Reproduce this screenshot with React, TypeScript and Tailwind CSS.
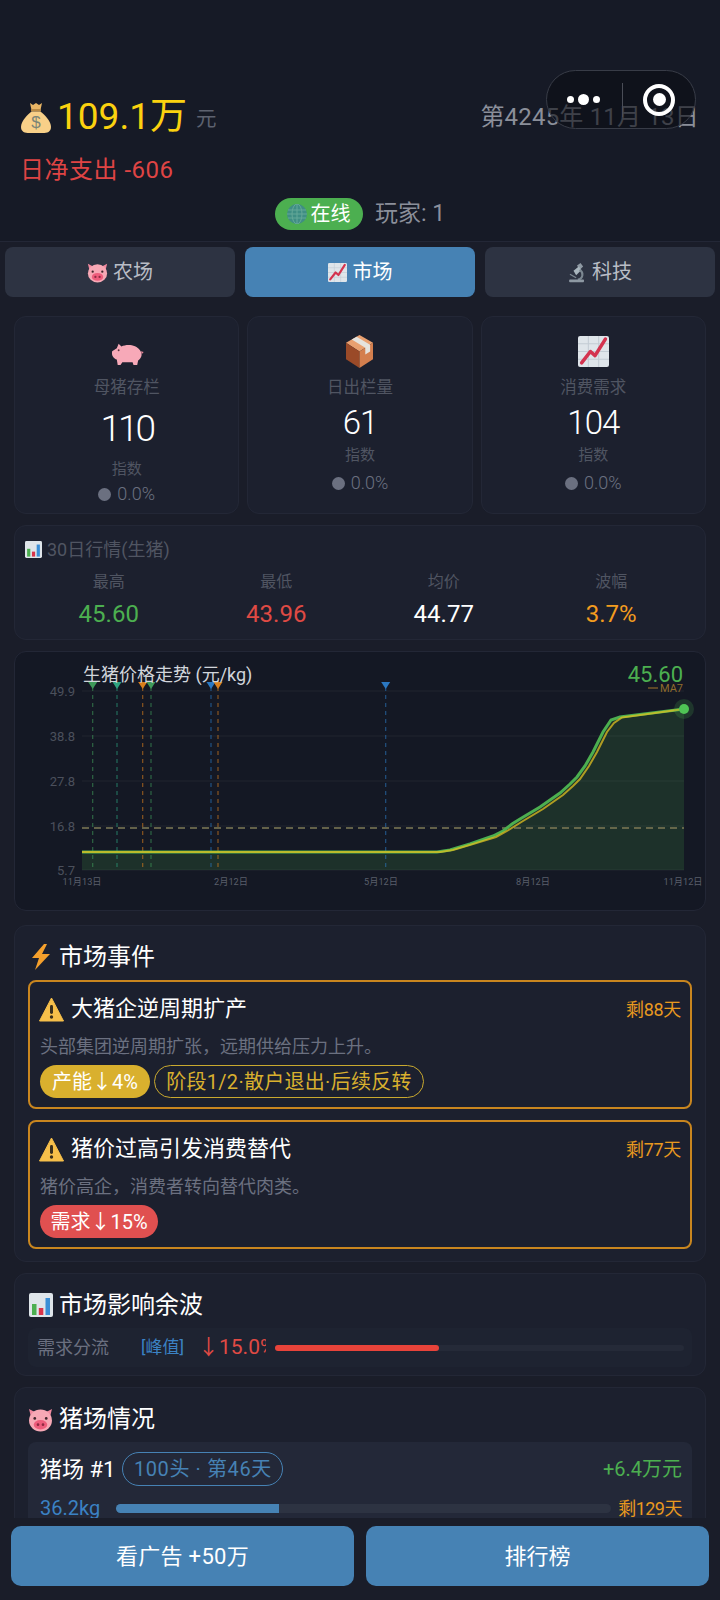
import React from 'react'

const MoneyBag = () => (
  <svg width="32" height="34" viewBox="0 0 32 34">
    <path d="M10 3 L13 5 L16 3 L19 5 L22 3 L20.5 10 H11.5 Z" fill="#e9b565" />
    <rect x="11" y="9" width="10" height="2.5" rx="1" fill="#b98a45" />
    <path d="M11.5 11.5 C6 16 1 22 1 27 C1 32 5 33 9 33 H23 C27 33 31 32 31 27 C31 22 26 16 20.5 11.5 Z" fill="#f8d088" />
    <text x="16" y="28" textAnchor="middle" fontSize="17" fontFamily="Liberation Sans, sans-serif" fill="#7c8577">$</text>
  </svg>
)

const PigFace = ({ size = 24 }: { size?: number }) => (
  <svg width={size} height={size} viewBox="0 0 24 24">
    <path d="M1 2 L7 5 L3 10 Z M23 2 L17 5 L21 10 Z" fill="#f28aa0" />
    <ellipse cx="12" cy="13" rx="11" ry="10.5" fill="#f7a8b5" />
    <circle cx="6.5" cy="11" r="1.3" fill="#40262c" />
    <circle cx="17.5" cy="11" r="1.3" fill="#40262c" />
    <ellipse cx="12" cy="17" rx="6.5" ry="4.5" fill="#ee5d7c" />
    <circle cx="9.6" cy="17" r="1.3" fill="#8f2a42" />
    <circle cx="14.4" cy="17" r="1.3" fill="#8f2a42" />
  </svg>
)

const ChartUp = ({ size = 22 }: { size?: number }) => (
  <svg width={size} height={size} viewBox="0 0 30 30">
    <rect x="0" y="0" width="30" height="30" rx="2" fill="#dfe5ea" />
    <path d="M0 7.5 H30 M0 15 H30 M0 22.5 H30 M10 0 V30 M20 0 V30" stroke="#c3ccd4" strokeWidth="1" />
    <path d="M3.5 26 L12 15 L16.5 19 L26.5 3" fill="none" stroke="#d4334f" strokeWidth="3.4" strokeLinejoin="round" strokeLinecap="round" />
  </svg>
)

const BarChart = ({ size = 24 }: { size?: number }) => (
  <svg width={size} height={size} viewBox="0 0 24 24">
    <rect x="0" y="0" width="24" height="24" rx="2" fill="#dfe5ea" />
    <rect x="3" y="11" width="4.5" height="11" fill="#4caf50" />
    <rect x="9.8" y="15" width="4.5" height="7" fill="#d9344a" />
    <rect x="16.5" y="5" width="4.5" height="17" fill="#3b8ed6" />
  </svg>
)

const Microscope = () => (
  <svg width="18" height="21" viewBox="0 0 20 24">
    <path d="M10 4 L14 1 L17 5 L13 9 Z" fill="#8e99a3" />
    <path d="M6 10 L12 5 L15 9 L9 15 Z" fill="#a9b6be" />
    <path d="M13 9 C18 12 17 19 11 20" fill="none" stroke="#7b8791" strokeWidth="2.4" />
    <rect x="1" y="20" width="17" height="3" rx="1" fill="#8e99a3" />
    <path d="M2 14 L9 18" stroke="#7b8791" strokeWidth="1.6" />
  </svg>
)

const Globe = () => (
  <svg width="20" height="20" viewBox="0 0 20 20">
    <circle cx="10" cy="10" r="10" fill="#3f8e84" />
    <path d="M1 6 H19 M0 10 H20 M1 14 H19 M10 0 V20" stroke="#65a898" strokeWidth="1" />
    <ellipse cx="10" cy="10" rx="5" ry="10" fill="none" stroke="#65a898" strokeWidth="1" />
  </svg>
)

const Warning = () => (
  <svg width="25" height="25" viewBox="0 0 25 25" className="shrink-0 -ml-[1px]">
    <path d="M12.5 1 L24.5 24 H0.5 Z" fill="#f6bf4a" stroke="#f6bf4a" strokeWidth="1" strokeLinejoin="round" />
    <rect x="11" y="8" width="3" height="9" rx="1.4" fill="#3a2f1c" />
    <circle cx="12.5" cy="20" r="1.7" fill="#3a2f1c" />
  </svg>
)

const Bolt = () => (
  <svg width="22" height="26" viewBox="0 0 22 26">
    <path d="M14 0 L2 14 H9 L5 26 L20 10 H12 L17 0 Z" fill="#f5a02c" />
  </svg>
)

const PigBody = () => (
  <svg width="34" height="26" viewBox="0 0 36 28">
    <path d="M2 12 L7 9 L9 4 L12 7 C18 4 28 5 32 11 C35 15 34 19 30 22 L29 27 H25 L24 24 H13 L11 27 H8 L7 21 C4 20 1 17 2 12 Z" fill="#f7a9b8" />
    <path d="M33 12 L36 13 L34 15 Z" fill="#e58799" />
    <circle cx="9" cy="11" r="1" fill="#5a2e39" />
  </svg>
)

const Box = () => (
  <svg width="27" height="33" viewBox="0 0 28 34">
    <path d="M14 0 L28 8 L14 17 L0 8 Z" fill="#e9a070" />
    <path d="M0 8 L14 17 V34 L0 25 Z" fill="#9a4a28" />
    <path d="M28 8 L14 17 V34 L28 25 Z" fill="#d47f4e" />
    <path d="M6 4.5 L11 1.7 L25 10 V17 L20 20 V13 Z" fill="#e5e3de" />
  </svg>
)

const Stat = ({ icon, label, value, big }: { icon: React.ReactNode; label: string; value: string; big?: boolean }) => (
  <div className="h-[198px] rounded-xl border border-[#232736] bg-[#1c202e] flex flex-col items-center">
    <div className={big ? 'h-[32px] mt-[20px] flex items-center' : 'h-[34px] mt-[17px] flex items-center'}>{icon}</div>
    <div className={big ? 'mt-[8px] text-[16.5px] leading-[22px] text-[#505562]' : 'mt-[9px] text-[16.5px] leading-[22px] text-[#505562]'}>{label}</div>
    <div className={big ? 'mt-[8px] text-[37px] leading-[44px] font-light tracking-[-3px] text-white' : 'mt-[4px] text-[33px] leading-[40px] font-light tracking-[-1px] text-white'}>{value}</div>
    <div className={big ? 'mt-[8px] text-[15px] leading-[20px] text-[#505562]' : 'mt-[2px] text-[15px] leading-[20px] text-[#505562]'}>指数</div>
    <div className={big ? 'mt-[4px] flex items-center gap-[6px] text-[18px] leading-[22px] font-light text-[#6b7080]' : 'mt-[7px] flex items-center gap-[6px] text-[18px] leading-[22px] font-light text-[#6b7080]'}>
      <span className="w-[13px] h-[13px] rounded-full bg-[#6b7080]" />
      0.0%
    </div>
  </div>
)

const Quote = ({ label, value, color }: { label: string; value: string; color: string }) => (
  <div className="flex flex-col items-center">
    <div className="text-[16px] leading-[22px] text-[#505562]">{label}</div>
    <div className={`mt-[6px] text-[24px] leading-[30px] ${color}`}>{value}</div>
  </div>
)

const gridYs = [692, 737, 782, 827, 871]
const yLabels = ['49.9', '38.8', '27.8', '16.8', '5.7']
const xLabels: [number, string][] = [[82, '11月13日'], [231, '2月12日'], [381, '5月12日'], [533, '8月12日'], [683, '11月12日']]
const markers: [number, string][] = [
  [92.7, '#3f9a5a'], [117, '#2fa37f'], [142.7, '#d97f1c'], [151, '#3f9a5a'],
  [211, '#2b78c2'], [218, '#d97f1c'], [385.7, '#2b78c2'],
]
const pricePts = '82,853 437,853 450,851 470,845 493,837 503,832 512,825 520,820 540,808 560,794 570,785 577,778 585,767 593,753 603,733 611,721 620,718 684,710'
const maPts = '82,853 440,853 453,851 473,845 496,838 507,832 523,822 543,810 563,796 573,787 580,780 589,767 597,753 607,733 614,724 622,718.5 684,710'

const PriceChart = () => (
  <div className="relative h-[260px] rounded-xl border border-[#232736] bg-[#141824]">
    <svg width="692" height="260" viewBox="14 652 692 260" className="absolute inset-[-1px]">
      {gridYs.map(y => (
        <line key={y} x1="82" x2="684" y1={y} y2={y} stroke="#20242f" strokeWidth="1" />
      ))}
      {yLabels.map((t, i) => (
        <text key={t} x="75" y={gridYs[i] + 5} textAnchor="end" fontSize="13" fill="#4b505c">{t}</text>
      ))}
      <polygon points={`${pricePts} 684,871 82,871`} fill="#4caf50" fillOpacity="0.17" />
      <line x1="82" x2="684" y1="829" y2="829" stroke="#7d7a55" strokeWidth="1.3" strokeDasharray="7 5" />
      {markers.map(([x, c]) => (
        <g key={x}>
          <line x1={x} x2={x} y1="688" y2="871" stroke={c} strokeOpacity="0.6" strokeWidth="1.2" strokeDasharray="4 4" />
          <path d={`M${x - 4.5} 683 H${x + 4.5} L${x} 690 Z`} fill={c} />
        </g>
      ))}
      <polyline points={pricePts} fill="none" stroke="#4caf50" strokeWidth="3" />
      <polyline points={maPts} fill="none" stroke="#e0c020" strokeOpacity="0.75" strokeWidth="2" />
      <circle cx="684" cy="710" r="10" fill="#4caf50" fillOpacity="0.2" />
      <circle cx="684" cy="710" r="5" fill="#4fc355" />
      {xLabels.map(([x, t]) => (
        <text key={t} x={x} y="886" textAnchor="middle" fontSize="9.2" fill="#5a5f6b">{t}</text>
      ))}
      <path d="M648 689 H658" stroke="#a5772a" strokeWidth="1" />
      <text x="683" y="693" textAnchor="end" fontSize="11" fill="#8f6c2c">MA7</text>
    </svg>
    <div className="absolute left-[68px] top-[11px] text-[18px] leading-[24px] text-[#d1d5db]">生猪价格走势 (元/kg)</div>
    <div className="absolute right-[22px] top-[15px] text-[22px] leading-[16px] text-[#4caf50]">45.60</div>
  </div>
)

const EventCard = ({ title, days, desc, children }: { title: string; days: string; desc: string; children: React.ReactNode }) => (
  <div className="h-[129px] rounded-lg border-2 border-[#c9861f] pl-[10px] pr-[9px] pt-[12px]">
    <div className="flex items-center justify-between h-[30px]">
      <div className="flex items-center gap-[7px] text-[22px] leading-[30px] text-white">
        <Warning />
        {title}
      </div>
      <div className="text-[18px] tracking-[-0.3px] text-[#e8991f]">{days}</div>
    </div>
    <div className="mt-[11px] text-[18px] leading-[24px] text-[#6b7080]">{desc}</div>
    <div className="mt-[6px] flex gap-[4px]">{children}</div>
  </div>
)

const Heading = ({ icon, text }: { icon: React.ReactNode; text: string }) => (
  <div className="flex items-center gap-[6px] h-[32px] text-[24px] text-white">
    <span className="w-[25px] flex justify-center">{icon}</span>
    {text}
  </div>
)

const panel = 'rounded-xl border border-[#232736] bg-[#1c202e] px-[13px] pt-[15px]'

export default function App() {
  return (
    <div className="relative w-[720px] h-[1600px] flex flex-col overflow-hidden bg-[#1a1d29] font-['Roboto','Noto_Sans_CJK_SC',sans-serif]">
      {/* Header */}
      <div className="h-[242px] shrink-0 bg-[#161a26] border-b border-[#232736] pt-[95px]">
        <div className="flex items-center justify-between h-[44px] pl-[20px] pr-[21px]">
          <div className="flex items-center">
            <MoneyBag />
            <span className="ml-[5px] text-[37px] leading-[44px] text-[#fbd20f]">109.1万</span>
            <span className="ml-[9px] mt-[5px] text-[20.5px] text-[#5d6270]">元</span>
          </div>
          <div className="text-[24px] leading-[32px] tracking-[0.2px] text-[#8b8f9a]">第4245年 11月 13日</div>
        </div>
        <div className="mt-[15px] pl-[20px] text-[24px] leading-[32px] tracking-[0.5px] text-[#df4444]">日净支出 -606</div>
        <div className="mt-[11px] flex justify-center items-center gap-[12px]">
          <div className="flex items-center gap-[3px] h-[32px] w-[88px] rounded-full bg-[#4caf50] justify-center text-[20px] text-white">
            <Globe />
            在线
          </div>
          <div className="text-[23px] text-[#8b8f9a]">玩家: 1</div>
        </div>
      </div>

      {/* WeChat capsule */}
      <div className="absolute left-[546px] top-[70px] w-[150px] h-[59px] rounded-full border border-[#383c47] bg-[#0b0d14]/60 flex items-center">
        <div className="w-[75px] flex justify-center items-center gap-[4px] pr-[3px]">
          <span className="w-[7px] h-[7px] rounded-full bg-white" />
          <span className="w-[11px] h-[11px] rounded-full bg-white" />
          <span className="w-[7px] h-[7px] rounded-full bg-white" />
        </div>
        <div className="w-px h-[34px] bg-[#4a4d57]" />
        <div className="flex-1 flex justify-center">
          <div className="w-[32px] h-[32px] rounded-full border-[4px] border-white flex items-center justify-center">
            <span className="w-[13px] h-[13px] rounded-full bg-white" />
          </div>
        </div>
      </div>

      {/* Tabs */}
      <div className="shrink-0 grid grid-cols-3 gap-[10px] px-[5px] pt-[5px] pb-[6px]">
        <div className="h-[50px] rounded-lg bg-[#2d3342] flex items-center justify-center gap-[5px] text-[20px] text-[#b9bdc6]">
          <PigFace size={21} />
          农场
        </div>
        <div className="h-[50px] rounded-lg bg-[#4682b4] flex items-center justify-center gap-[6px] text-[20px] text-white">
          <ChartUp size={19} />
          市场
        </div>
        <div className="h-[50px] rounded-lg bg-[#2d3342] flex items-center justify-center gap-[6px] text-[20px] text-[#b9bdc6]">
          <Microscope />
          科技
        </div>
      </div>

      {/* Content */}
      <div className="flex-1 min-h-0 overflow-hidden px-[14px] pt-[13px] flex flex-col gap-[11px]">
        <div className="grid grid-cols-3 gap-[8px] shrink-0">
          <Stat big icon={<PigBody />} label="母猪存栏" value="110" />
          <Stat icon={<Box />} label="日出栏量" value="61" />
          <Stat icon={<ChartUp size={31} />} label="消费需求" value="104" />
        </div>

        <div className="h-[115px] shrink-0 rounded-xl border border-[#232736] bg-[#1c202e] px-[10px] pt-[12px]">
          <div className="flex items-center gap-[5px] h-[22px] text-[18px] text-[#505562]">
            <BarChart size={17} />
            30日行情(生猪)
          </div>
          <div className="mt-[11px] grid grid-cols-4">
            <Quote label="最高" value="45.60" color="text-[#4caf50]" />
            <Quote label="最低" value="43.96" color="text-[#e04a44]" />
            <Quote label="均价" value="44.77" color="text-white" />
            <Quote label="波幅" value="3.7%" color="text-[#f39c1f]" />
          </div>
        </div>

        <div className="shrink-0 mb-[3px]">
          <PriceChart />
        </div>

        <div className={`${panel} h-[337px] shrink-0`}>
          <Heading icon={<Bolt />} text="市场事件" />
          <div className="mt-[7px] flex flex-col gap-[11px]">
            <EventCard title="大猪企逆周期扩产" days="剩88天" desc="头部集团逆周期扩张，远期供给压力上升。">
              <span className="h-[33px] w-[110px] rounded-full bg-[#d9b02e] flex items-center justify-center text-[20px] text-white">产能↓4%</span>
              <span className="h-[33px] w-[270px] rounded-full border border-[#c9a92f] flex items-center justify-center text-[20px] tracking-[0.3px] text-[#d9b02e]">阶段1/2·散户退出·后续反转</span>
            </EventCard>
            <EventCard title="猪价过高引发消费替代" days="剩77天" desc="猪价高企，消费者转向替代肉类。">
              <span className="h-[33px] w-[118px] rounded-full bg-[#e05050] flex items-center justify-center text-[20px] text-white">需求↓15%</span>
            </EventCard>
          </div>
        </div>

        <div className={`${panel} h-[103px] shrink-0`}>
          <Heading icon={<BarChart />} text="市场影响余波" />
          <div className="mt-[7px] h-[39px] rounded-lg bg-[#1e2331] flex items-center pl-[9px] pr-[8px]">
            <div className="w-[104px] text-[18px] text-[#6b7080]">需求分流</div>
            <div className="w-[57px] text-[17px] text-[#3b82c4]">[峰值]</div>
            <div className="w-[68px] overflow-hidden whitespace-nowrap text-[21px] text-[#e04a44]">↓15.0%</div>
            <div className="ml-[9px] flex-1 h-[6px] rounded-full bg-[#252a38]">
              <div className="h-full w-[40%] rounded-full bg-[#e8433a]" />
            </div>
          </div>
        </div>

        <div className={`${panel} shrink-0`}>
          <Heading icon={<PigFace size={25} />} text="猪场情况" />
          <div className="mt-[7px] rounded-lg bg-[#232838] pl-[12px] pr-[10px] pt-[10px] pb-[12px]">
            <div className="flex items-center justify-between">
              <div className="flex items-center gap-[7px]">
                <span className="text-[22px] text-white">猪场 #1</span>
                <span className="h-[34px] w-[161px] rounded-full border border-[#4682b4] flex items-center justify-center text-[20px] tracking-[0.6px] text-[#4682b4]">100头 · 第46天</span>
              </div>
              <div className="text-[20px] text-[#4caf50]">+6.4万元</div>
            </div>
            <div className="mt-[9px] flex items-center h-[26px]">
              <div className="w-[76px] text-[20px] text-[#3b82c4]">36.2kg</div>
              <div className="w-[495px] h-[9px] rounded-full bg-[#2d3342]">
                <div className="h-full w-[33%] rounded-l-full bg-[#4682b4]" />
              </div>
              <div className="ml-auto text-[18px] tracking-[-0.5px] text-[#e8991f]">剩129天</div>
            </div>
          </div>
        </div>
      </div>

      {/* Bottom actions */}
      <div className="shrink-0 h-[82px] bg-[#1a1d29] px-[11px] pt-[8px] grid grid-cols-2 gap-[12px]">
        <div className="h-[60px] rounded-[10px] bg-[#4682b4] flex items-center justify-center text-[22px] tracking-[0.3px] text-white">看广告 +50万</div>
        <div className="h-[60px] rounded-[10px] bg-[#4682b4] flex items-center justify-center text-[22px] text-white">排行榜</div>
      </div>
    </div>
  )
}
